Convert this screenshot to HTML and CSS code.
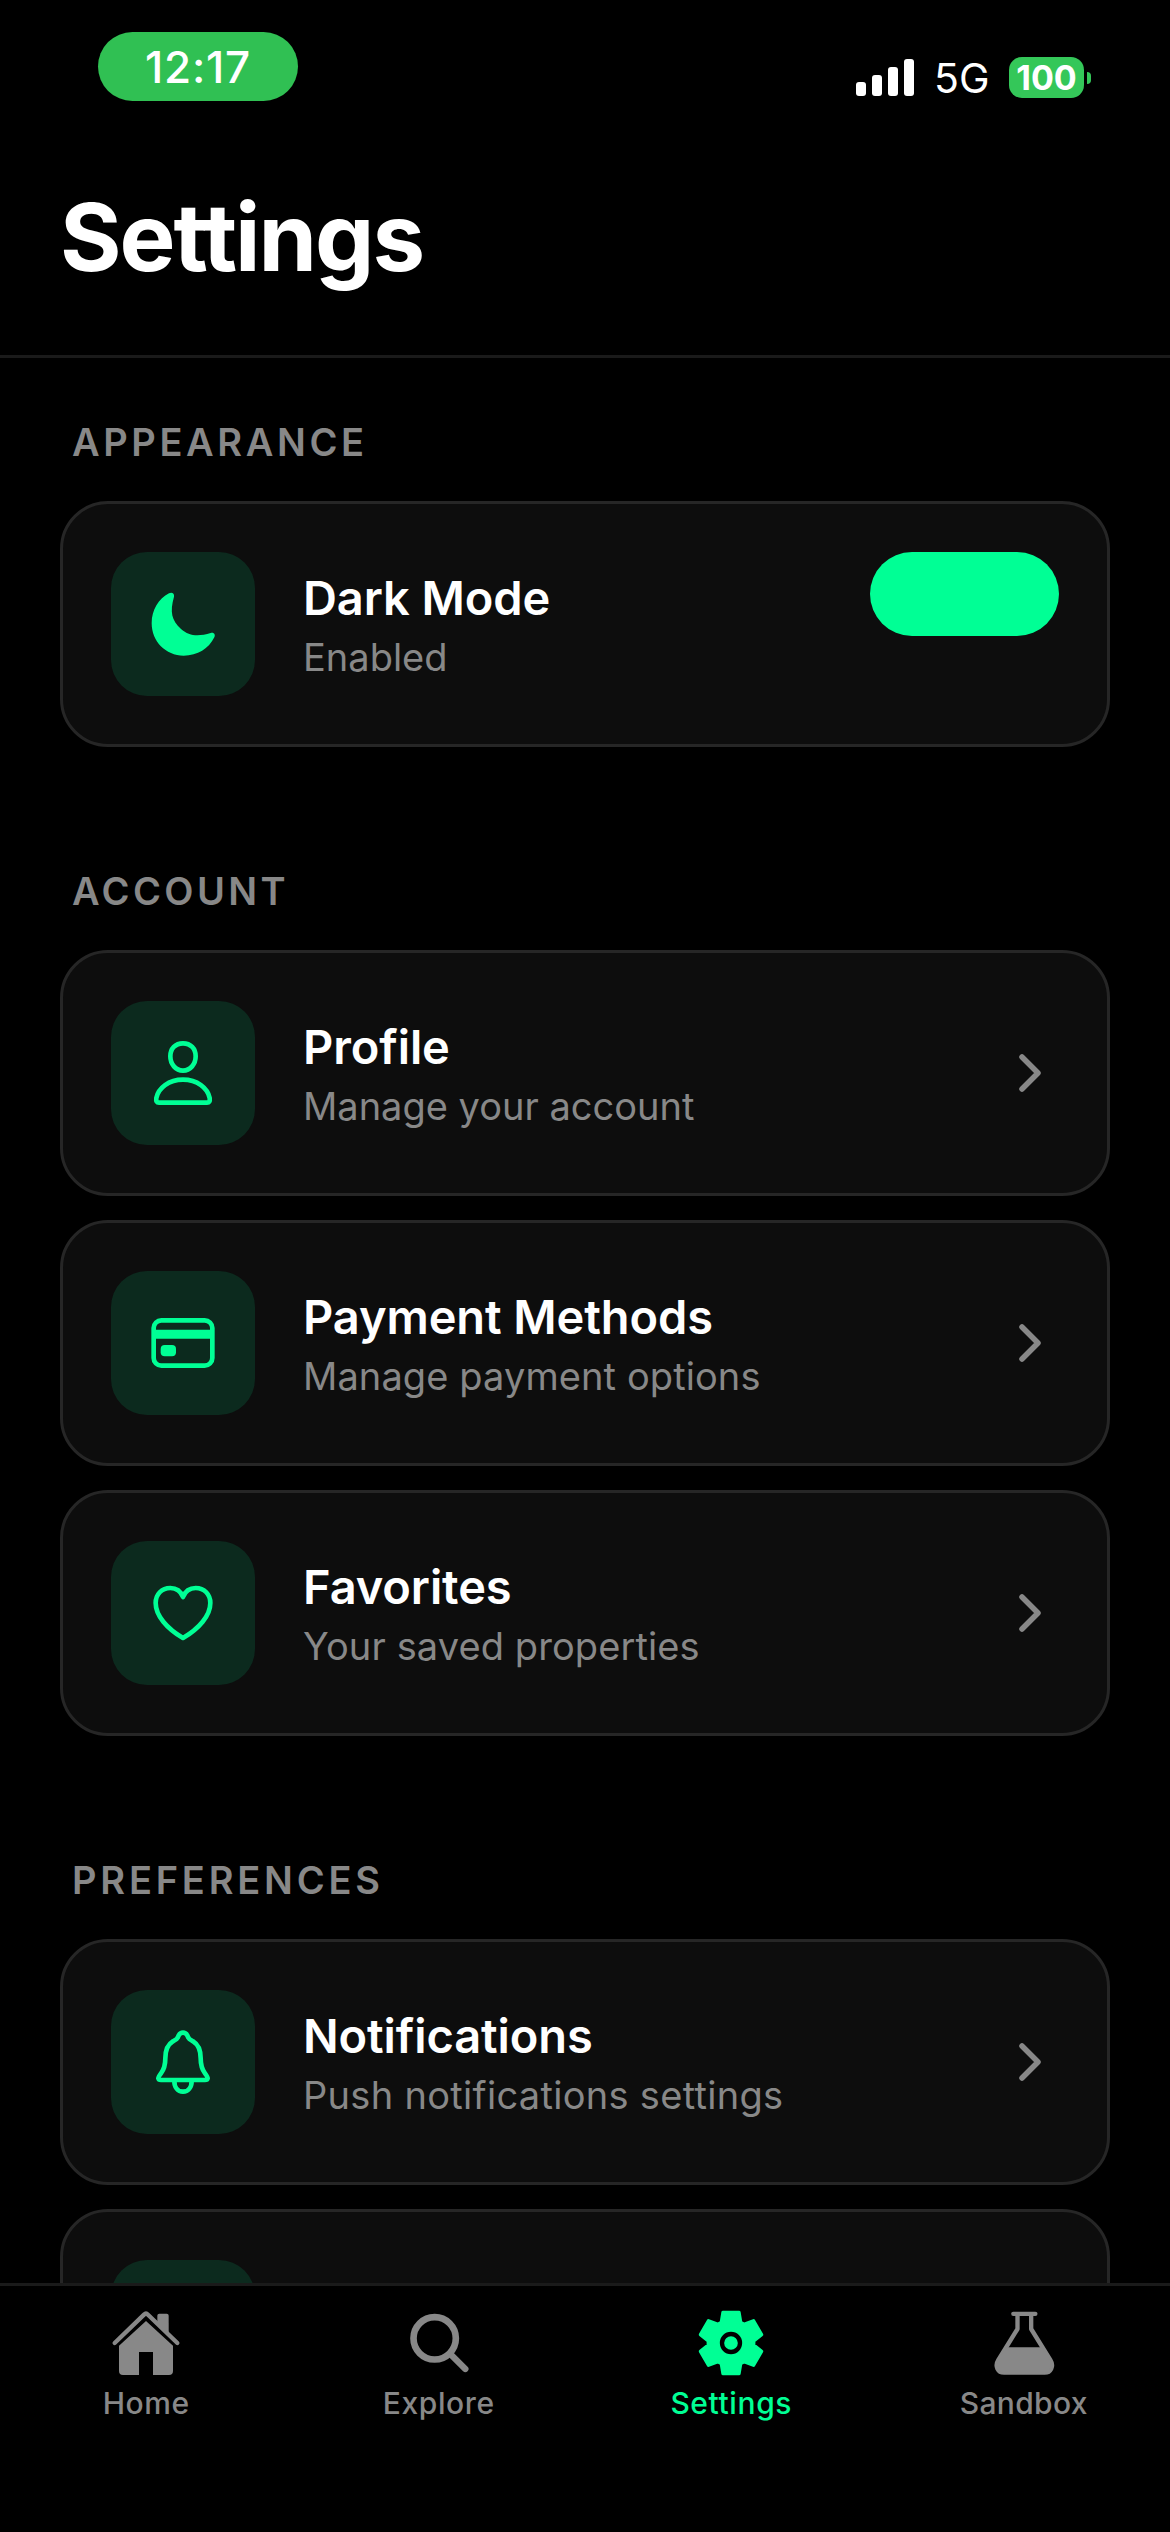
FILE: index.html
```html
<!DOCTYPE html>
<html lang="en">
<head>
<meta charset="utf-8">
<title>Settings</title>
<link rel="stylesheet" href="styles.css">
</head>
<body>
<div class="screen">
  <div class="status-bar">
    <div class="time-pill"><span class="time">12:17</span></div>
    <div class="status-right">
      <svg class="signal" viewBox="0 0 58 37"><rect x="0" y="23" width="10" height="14" rx="3"/><rect x="16" y="16" width="10" height="21" rx="3"/><rect x="32" y="8" width="10" height="29" rx="3"/><rect x="48" y="0" width="10" height="37" rx="3"/></svg>
      <span class="network">5G</span>
      <div class="battery"><span class="battery-body">100</span><span class="battery-tip"></span></div>
    </div>
  </div>
  <header class="header"><h1 class="title">Settings</h1></header>
  <main class="content">
    <section class="section">
      <h2 class="label label-appearance">APPEARANCE</h2>
      <div class="card">
        <div class="tile"><svg class="glyph" viewBox="0 0 432 432"><path class="solid" d="M174 124C182 119 191 124 189 134C176 180 182 205 210 231C235 254 265 253 299 243C309 240 314 248 310 256C293 290 260 311 218 311C164 311 122 268 122 214C122 174 143 140 174 124Z"/></svg></div>
        <div class="text"><div class="name">Dark Mode</div><div class="desc">Enabled</div></div>
        <div class="toggle"></div>
      </div>
    </section>
    <section class="section">
      <h2 class="label label-account">ACCOUNT</h2>
      <div class="card">
        <div class="tile"><svg class="glyph" viewBox="0 0 432 432"><path d="M216 127C239 127 254 143 254 166C254 189 238 209 216 209C194 209 178 189 178 166C178 143 193 127 216 127Z"/><path d="M216 236C259 236 290 262 296 291Q298 305 288 305H144Q134 305 136 291C142 262 173 236 216 236Z"/></svg></div>
        <div class="text"><div class="name">Profile</div><div class="desc">Manage your account</div></div>
        <svg class="chevron" viewBox="0 0 24 40"><path d="M4 4L20 20L4 36"/></svg>
      </div>
      <div class="card">
        <div class="tile"><svg class="glyph" viewBox="0 0 432 432"><rect x="128" y="148" width="176" height="136" rx="23"/><path class="solid" d="M126 176H306V203H126Z"/><rect class="solid" x="149" y="222" width="46" height="34" rx="12"/></svg></div>
        <div class="text"><div class="name">Payment Methods</div><div class="desc desc-wide">Manage payment options</div></div>
        <svg class="chevron" viewBox="0 0 24 40"><path d="M4 4L20 20L4 36"/></svg>
      </div>
      <div class="card">
        <div class="tile"><svg class="glyph" viewBox="0 0 432 432"><path d="M216 168C209 150 194 141 178 141C152 141 134 160 134 186C134 224 168 263 216 291C264 263 298 224 298 186C298 160 280 141 254 141C238 141 223 150 216 168Z"/></svg></div>
        <div class="text"><div class="name">Favorites</div><div class="desc desc-wide">Your saved properties</div></div>
        <svg class="chevron" viewBox="0 0 24 40"><path d="M4 4L20 20L4 36"/></svg>
      </div>
    </section>
    <section class="section">
      <h2 class="label label-preferences">PREFERENCES</h2>
      <div class="card">
        <div class="tile"><svg class="glyph" viewBox="0 0 432 432"><path d="M216 128C207 128 203 134 200 143C196 150 191 150 186 154C166 166 163 185 163 205C163 228 158 240 150 250C144 258 141 262 142 265Q143 270 150 270H282Q289 270 290 265C291 262 288 258 282 250C274 240 269 228 269 205C269 185 266 166 246 154C241 150 236 150 232 143C229 134 225 128 216 128Z"/><path d="M190 272C190 292 200 305 216 305C232 305 242 292 242 272"/></svg></div>
        <div class="text"><div class="name">Notifications</div><div class="desc desc-wider">Push notifications settings</div></div>
        <svg class="chevron" viewBox="0 0 24 40"><path d="M4 4L20 20L4 36"/></svg>
      </div>
      <div class="card"><div class="tile"></div></div>
    </section>
  </main>
  <nav class="tab-bar">
    <div class="tab">
      <svg class="tab-icon" viewBox="0 0 216 216"><path class="fill" d="M142 54V32Q142 26 148 26H170Q176 26 176 32V86Z"/><path class="line" stroke-width="13" d="M14 114L102 29Q108 23 114 29L202 114"/><path class="fill" d="M108 48L27 122V198Q27 210 39 210H87V141H129V210H177Q189 210 189 198V122Z"/></svg>
      <span class="tab-label">Home</span>
    </div>
    <div class="tab">
      <svg class="tab-icon" viewBox="0 0 216 216"><circle class="line" stroke-width="20" cx="95" cy="100" r="63.5"/><path class="line" stroke-width="19" d="M145 150L187 192"/></svg>
      <span class="tab-label">Explore</span>
    </div>
    <div class="tab active">
      <svg class="tab-icon" viewBox="-108 -114 216 216"><path class="fill line" stroke-width="10" d="M-24 -92H24L29 -62L39.200 -56.100L67.700 -66.800L91.700 -25.200L68.200 -5.900V5.900L91.700 25.200L67.700 66.800L39.200 56.100L29 62L24 92H-24L-29 62L-39.200 56.100L-67.700 66.800L-91.700 25.200L-68.200 5.900V-5.900L-91.700 -25.200L-67.700 -66.800L-39.200 -56.100L-29 -62Z"/><circle class="gear-ring" r="27"/></svg>
      <span class="tab-label">Settings</span>
    </div>
    <div class="tab">
      <svg class="tab-icon" viewBox="0 0 216 216"><path class="line" stroke-width="13" d="M76 26.500H142"/><path class="outline" stroke-width="13" d="M88.500 28V72L31 165C19 184 30 203 48 203H170C188 203 199 184 187 165L129.500 72V28"/><path class="fill" d="M52 127H166L190 170L184 200L160 206H50L30 195L28 170Z"/></svg>
      <span class="tab-label tab-label-tight">Sandbox</span>
    </div>
  </nav>
</div>
</body>
</html>
```
FILE: styles.css
```css
* { box-sizing: border-box; }
body { margin: 0; background: #000; font-family: Inter, "Liberation Sans", sans-serif; }
.screen { width: 1170px; height: 2532px; display: flex; flex-direction: column; overflow: hidden; background: #000; color: #fff; }
svg { display: block; flex: none; overflow: visible; }

.status-bar { flex: none; height: 141px; padding: 32px 79px 0 98px; display: flex; justify-content: space-between; align-items: flex-start; }
.time-pill { width: 200px; height: 69px; border-radius: 35px; background: #30c053; display: flex; align-items: center; justify-content: center; }
.time { font-size: 44px; line-height: 69px; font-weight: 500; letter-spacing: 0.8px; padding-top: 1px; }
.status-right { display: flex; align-items: center; margin-top: 25px; height: 41px; }
.signal { width: 58px; height: 37px; fill: #fff; }
.network { width: 56px; margin-left: 20px; margin-right: 19px; font-size: 41px; line-height: 43px; padding-top: 2px; white-space: nowrap; }
.battery { display: flex; align-items: center; gap: 3px; }
.battery-body { width: 75px; height: 41px; border-radius: 13px; background: #34c759; font-size: 34px; font-weight: 700; line-height: 41px; text-align: center; }
.battery-tip { width: 4px; height: 12px; border-radius: 0 6px 6px 0; background: #34c759; }

.header { flex: none; height: 217px; padding: 40px 60px 0; border-bottom: 3px solid #1a1a1a; }
.title { margin: 0; font-size: 94px; line-height: 112px; font-weight: 700; letter-spacing: -2px; font-variant-ligatures: none; }

.content { flex: 1; min-height: 0; overflow: hidden; padding: 60px 60px 0; display: flex; flex-direction: column; gap: 120px; }
.section { flex: none; display: flex; flex-direction: column; gap: 24px; }
.label { margin: 0 0 11px; padding-left: 12px; height: 48px; font-size: 38px; line-height: 48px; font-weight: 600; color: #888; letter-spacing: 3.6px; }
.label-account { letter-spacing: 3.4px; }
.label-preferences { letter-spacing: 3.8px; }
.card { height: 246px; padding: 48px; border: 3px solid #262626; border-radius: 48px; background: #0d0d0d; display: flex; align-items: flex-start; }
.tile { flex: none; width: 144px; height: 144px; border-radius: 36px; background: #0c2a1e; }
.glyph { width: 144px; height: 144px; fill: none; stroke: #00ff95; stroke-width: 14; stroke-linecap: round; stroke-linejoin: round; }
.solid { fill: #00ff95; stroke: none; }
.text { flex: 1; padding: 17px 0 0 48px; white-space: nowrap; }
.name { font-size: 47px; line-height: 58px; font-weight: 600; letter-spacing: -0.1px; }
.desc { font-size: 38px; line-height: 46px; margin-top: 7px; color: #888; }
.desc-wide { letter-spacing: 0.1px; }
.desc-wider { letter-spacing: 0.3px; }
.toggle { width: 189px; height: 84px; border-radius: 42px; background: #00ff95; }
.chevron { width: 24px; height: 40px; margin: 52px 17px 0 0; fill: none; stroke: #888; stroke-width: 5.500; stroke-linecap: round; stroke-linejoin: round; }

.tab-bar { flex: none; height: 249px; border-top: 3px solid #1a1a1a; background: #000; display: grid; grid-template-columns: repeat(4, 1fr); }
.tab { display: flex; flex-direction: column; align-items: center; padding-top: 19px; color: #888; }
.tab.active { color: #00ff95; }
.tab-icon { width: 72px; height: 72px; }
.fill { fill: currentColor; }
.line { stroke: currentColor; stroke-linecap: round; stroke-linejoin: round; }
.line:not(.fill) { fill: none; }
.outline { fill: none; stroke: currentColor; stroke-linejoin: round; }
.gear-ring { fill: none; stroke: #000; stroke-width: 13; }
.tab-label { margin-top: 8px; font-size: 30px; line-height: 36px; font-weight: 500; letter-spacing: 0.6px; }
.tab-label-tight { letter-spacing: 0.3px; }
```
